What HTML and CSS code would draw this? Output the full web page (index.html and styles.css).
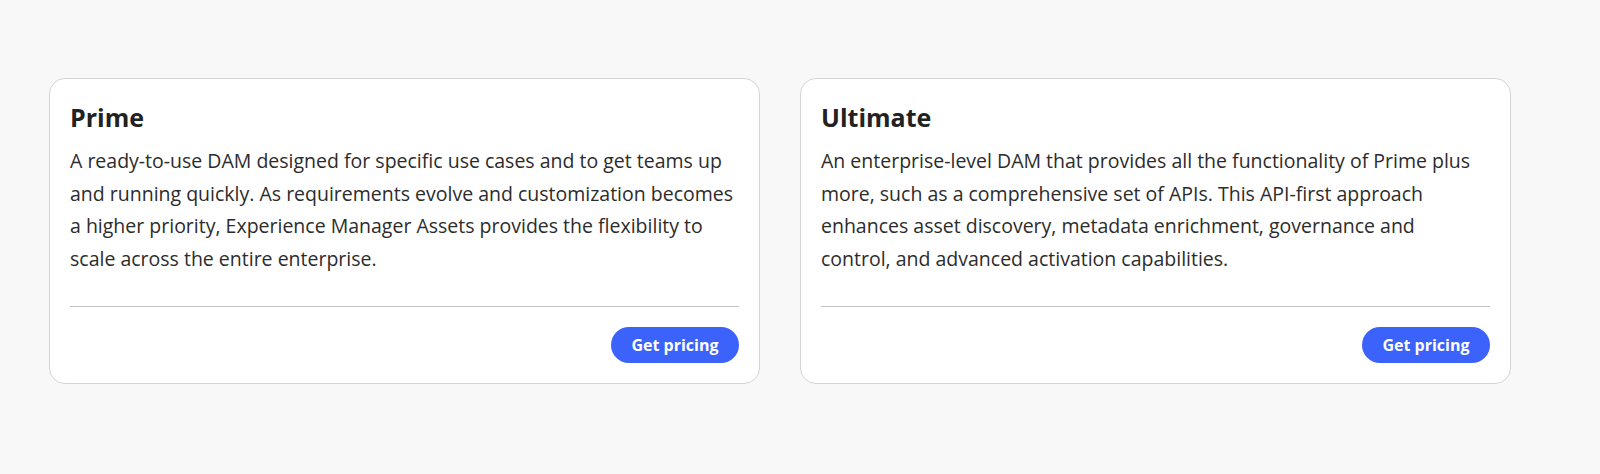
FILE: index.html
```html
<!DOCTYPE html>
<html lang="en">
<head>
<meta charset="utf-8">
<title>Plans</title>
<link rel="stylesheet" href="styles.css">
</head>
<body>
<main class="plans">
  <section class="card">
    <div class="card-body">
      <h2 class="card-title">Prime</h2>
      <p class="card-text">A ready-to-use DAM designed for specific use cases and to get teams up and running quickly. As requirements evolve and customization becomes a higher priority, Experience Manager Assets provides the flexibility to scale across the entire enterprise.</p>
    </div>
    <div class="card-footer">
      <a class="btn" href="#">Get pricing</a>
    </div>
  </section>
  <section class="card">
    <div class="card-body">
      <h2 class="card-title">Ultimate</h2>
      <p class="card-text">An enterprise-level DAM that provides all the functionality of Prime plus more, such as a comprehensive set of APIs. This API-first approach enhances asset discovery, metadata enrichment, governance and control, and advanced activation capabilities.</p>
    </div>
    <div class="card-footer">
      <a class="btn" href="#">Get pricing</a>
    </div>
  </section>
</main>
</body>
</html>
```
FILE: styles.css
```css
html, body {
  margin: 0;
  padding: 0;
}
body {
  background: #f8f8f8;
  font-family: "Open Sans", "Noto Sans", sans-serif;
  color: #2c2c2c;
}
.plans {
  display: grid;
  grid-template-columns: 711px 711px;
  gap: 40px;
  padding: 78px 0 0 49px;
}
.card {
  background: #fff;
  border: 1px solid #d5d5d5;
  border-radius: 16px;
  padding: 21px 20px 20px 20px;
  display: flex;
  flex-direction: column;
  box-sizing: border-box;
  height: 306px;
}
.card-body {
  flex: 1;
}
.card-title {
  margin: 0;
  font-size: 25px;
  line-height: 34px;
  font-weight: 700;
  color: #222;
}
.card-text {
  margin: 11px 0 0;
  max-width: 665px;
  font-size: 19.5px;
  line-height: 32.7px;
}
.card-footer {
  border-top: 1px solid #c6c6c6;
  padding-top: 20px;
  display: flex;
  justify-content: flex-end;
}
.btn {
  display: inline-flex;
  align-items: center;
  justify-content: center;
  height: 36px;
  width: 128px;
  box-sizing: border-box;
  border-radius: 18px;
  background: #3b63fb;
  color: #fff;
  text-decoration: none;
  font-weight: 700;
  font-size: 16px;
}
```
